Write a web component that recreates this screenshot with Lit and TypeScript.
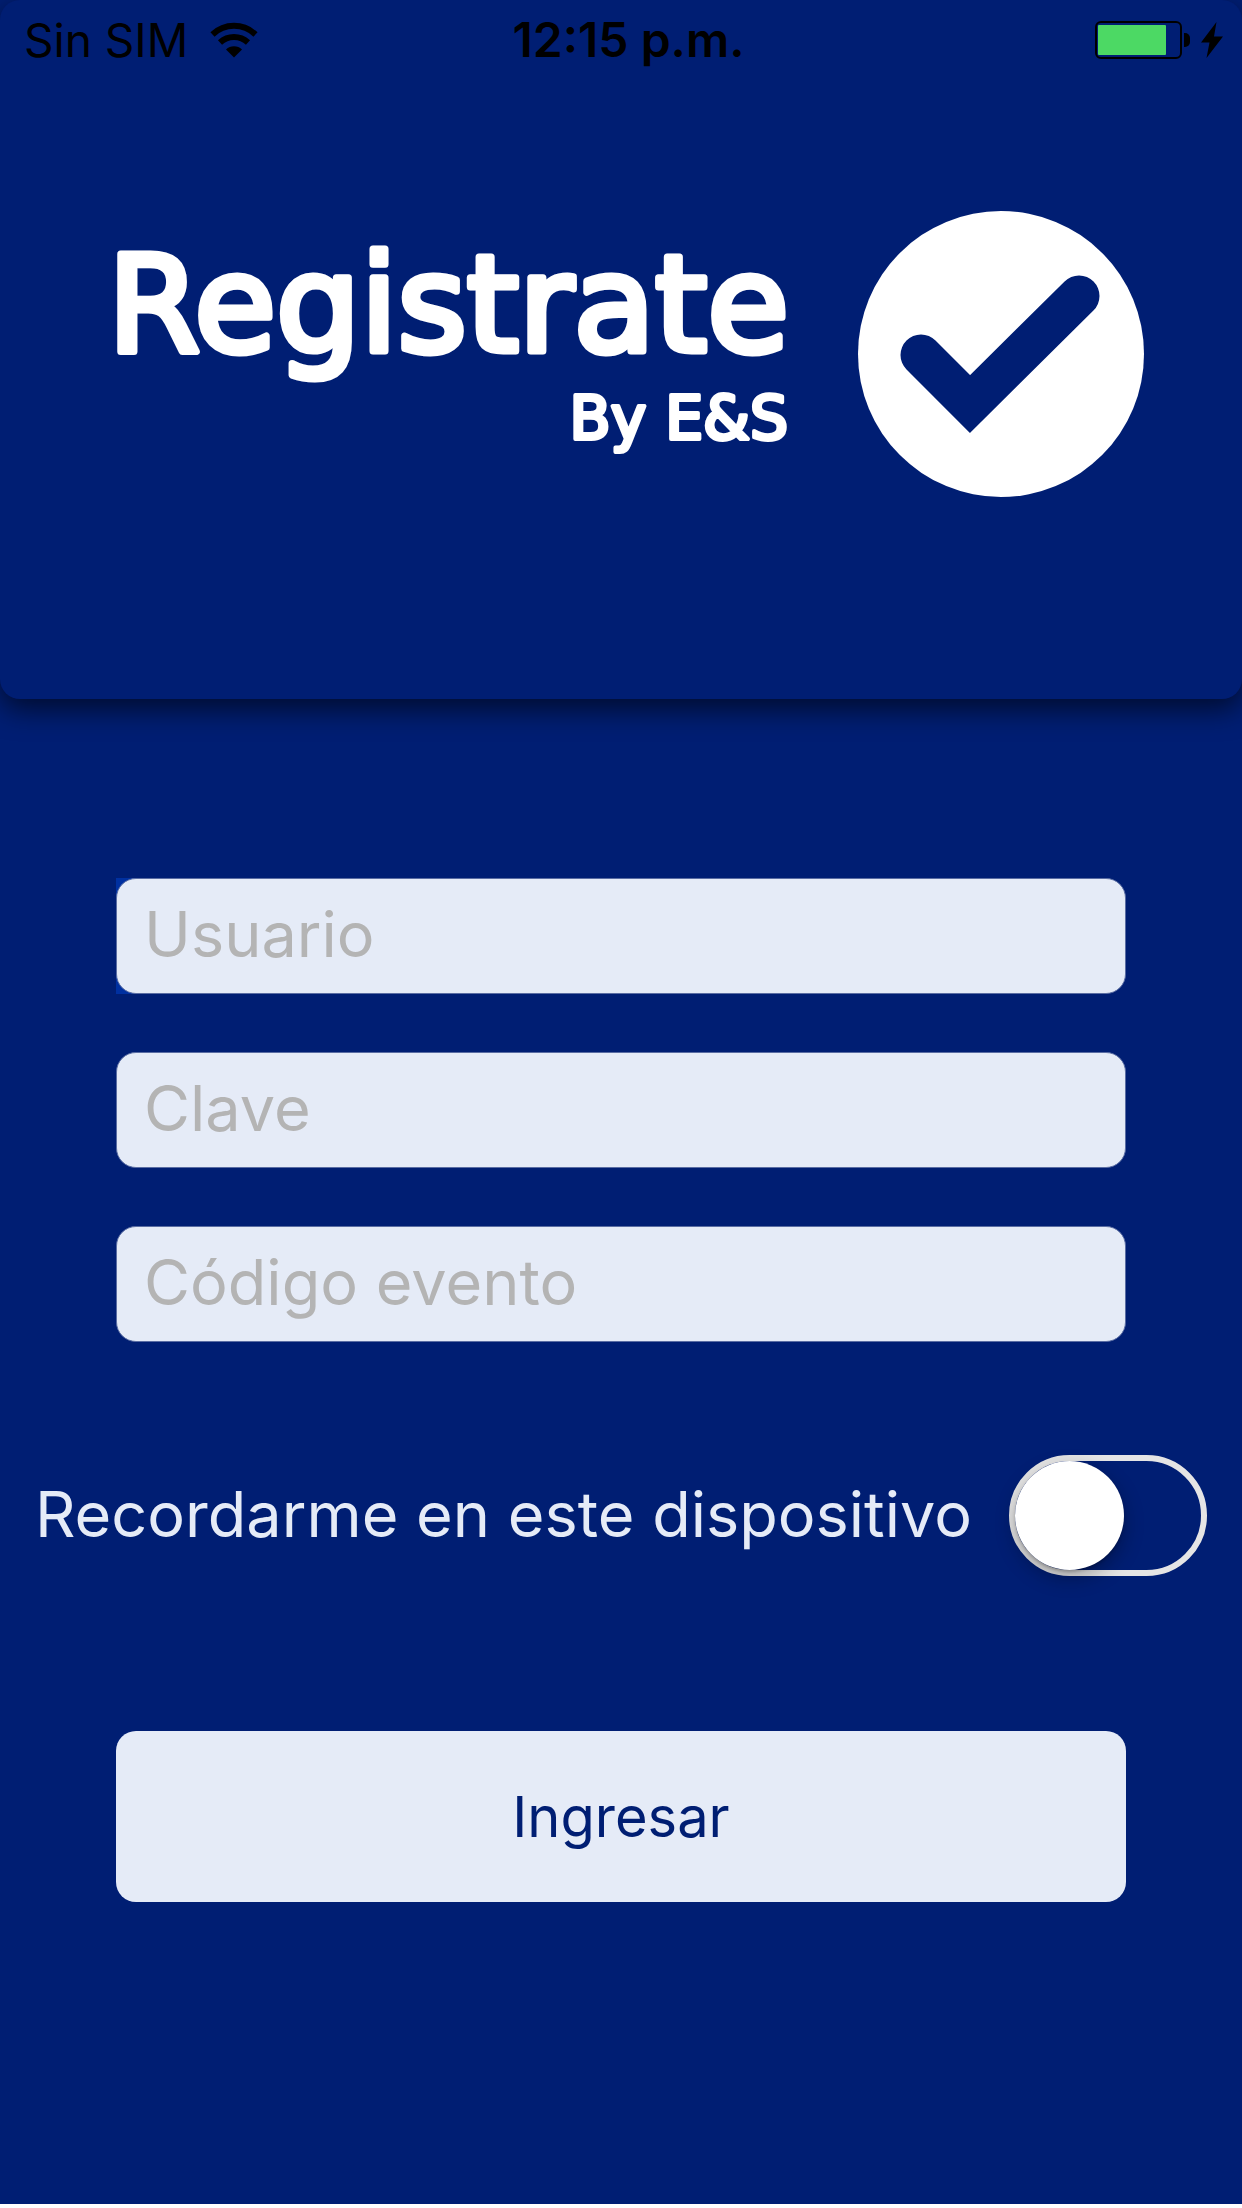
import { LitElement, html, css } from "lit";
import { customElement, state } from "lit/decorators.js";

@customElement("status-bar")
class StatusBar extends LitElement {
  static styles = css`
    :host {
      display: block;
    }
    .bar {
      display: grid;
      grid-template-columns: 1fr auto 1fr;
      align-items: center;
      height: 80px;
      padding: 0 19px 0 24px;
      color: #000;
      font-size: 46px;
      line-height: 56px;
    }
    .carrier,
    .power {
      display: flex;
      align-items: center;
    }
    .carrier {
      gap: 22px;
    }
    .power {
      justify-content: flex-end;
      gap: 10px;
    }
    .clock {
      padding-left: 10px;
      font-size: 48px;
      font-weight: 600;
    }
    svg {
      display: block;
    }
  `;

  render() {
    return html`
      <div class="bar">
        <div class="carrier">
          <span>Sin SIM</span>
          <svg width="48" height="36" viewBox="0 0 48 36" role="img" aria-label="Wi-Fi">
            <g fill="none" stroke="#000" stroke-width="6">
              <path d="M2.5 12.5a31 31 0 0 1 43 0" />
              <path d="M10 20.500a20.500 20.500 0 0 1 28 0" />
            </g>
            <path d="M16 27.500a11.500 11.500 0 0 1 16 0L24 35.500z" />
          </svg>
        </div>
        <time class="clock">12:15 p.m.</time>
        <div class="power">
          <svg width="96" height="38" viewBox="0 0 96 38" role="img" aria-label="Batería">
            <rect x="1" y="1" width="85" height="36" rx="5" fill="none" stroke="#000" stroke-width="2" />
            <rect x="3" y="4" width="68" height="30" rx="1" fill="#4cd964" />
            <path d="M89 12h1a5 5 0 0 1 5 5v4a5 5 0 0 1-5 5h-1z" />
          </svg>
          <svg width="22" height="36" viewBox="0 0 22 36" aria-hidden="true">
            <path d="M15.500 0 0 20.500h8.500L5.500 36 22 14.500h-9z" />
          </svg>
        </div>
      </div>
    `;
  }
}

@customElement("brand-logo")
class BrandLogo extends LitElement {
  static styles = css`
    :host {
      display: block;
    }
    .logo {
      display: block;
      width: 100%;
      height: auto;
    }
    .name,
    .owner {
      font-family: "DejaVu Sans", sans-serif;
      fill: #fff;
      stroke: #fff;
      stroke-linejoin: round;
    }
    .name {
      font-size: 133px;
      stroke-width: 7px;
    }
    .owner {
      font-size: 60px;
      stroke-width: 4px;
    }
  `;

  render() {
    return html`
      <svg class="logo" viewBox="-31 -31 1074 317" role="img" aria-label="Registrate By E&amp;S">
        <text class="name" x="679" y="140" text-anchor="end">Registrate</text>
        <text class="owner" x="678" y="228" text-anchor="end">By E&amp;S</text>
        <circle cx="891" cy="143" r="143" fill="#fff" />
        <path d="M811 144 860 193 969 85" fill="none" stroke="#001e73" stroke-width="41" stroke-linecap="round" />
      </svg>
    `;
  }
}

interface Field {
  id: string;
  label: string;
  type: string;
}

const FIELDS: Field[] = [
  { id: "usuario", label: "Usuario", type: "text" },
  { id: "clave", label: "Clave", type: "password" },
  { id: "codigo", label: "Código evento", type: "text" },
];

@customElement("app-root")
class AppRoot extends LitElement {
  @state() private remember = false;

  static styles = css`
    :host {
      display: block;
      font-family: Inter, "Liberation Sans", sans-serif;
    }
    * {
      box-sizing: border-box;
    }
    .page {
      min-height: 100vh;
      background: #001e73;
      border-bottom: 4px solid #fff;
    }
    .header {
      padding-bottom: 202px;
      border-radius: 20px;
      background: #001e73;
      box-shadow: 0 10px 28px rgba(0, 0, 0, 0.6);
    }
    .brand {
      padding: 100px 89px 0 79px;
    }
    .form {
      padding-top: 179px;
    }
    .fields {
      display: flex;
      flex-direction: column;
      gap: 58px;
      padding: 0 116px;
    }
    .field {
      display: block;
    }
    .field:first-child {
      background: linear-gradient(#0030a0, #0030a0) 0 0 / 24px 100% no-repeat;
    }
    .box {
      display: block;
      width: 100%;
      height: 116px;
      padding: 0 27px 4px;
      border: 1px solid #5a6da3;
      border-radius: 20px;
      background: #e5ebf7;
      color: #001e73;
      font: inherit;
      font-size: 63px;
      outline: none;
    }
    .box::placeholder {
      color: #b4b4b4;
      opacity: 1;
    }
    .remember {
      display: flex;
      align-items: center;
      justify-content: space-between;
      margin-top: 113px;
      padding: 0 35px;
      color: #e5ebf7;
      font-size: 63px;
      line-height: 76px;
    }
    .remember label {
      padding-bottom: 4px;
    }
    .switch {
      appearance: none;
      flex: none;
      width: 198px;
      height: 121px;
      margin: 0;
      border: 6px solid #e5e5e5;
      border-radius: 61px;
      background: transparent;
    }
    .switch::before {
      content: "";
      display: block;
      width: 109px;
      height: 109px;
      border-radius: 50%;
      background: #fff;
      box-shadow: 0 8px 20px rgba(0, 0, 0, 0.3), 0 2px 3px rgba(0, 0, 0, 0.2);
    }
    .switch:checked {
      border-color: #4cd964;
      background: #4cd964;
    }
    .switch:checked::before {
      margin-left: auto;
    }
    .actions {
      padding: 155px 116px 0;
    }
    .submit {
      display: block;
      width: 100%;
      height: 171px;
      padding: 0;
      border: 0;
      border-radius: 20px;
      background: #e5ebf7;
      color: #001e73;
      font: inherit;
      font-size: 56px;
    }
  `;

  private toggle(e: Event) {
    this.remember = (e.target as HTMLInputElement).checked;
  }

  render() {
    return html`
      <div class="page">
        <header class="header">
          <status-bar></status-bar>
          <div class="brand"><brand-logo></brand-logo></div>
        </header>
        <form class="form" @submit=${(e: Event) => e.preventDefault()}>
          <div class="fields">
            ${FIELDS.map(
              (f) => html`
                <label class="field" for=${f.id}>
                  <input class="box" id=${f.id} type=${f.type} placeholder=${f.label} aria-label=${f.label} />
                </label>
              `
            )}
          </div>
          <div class="remember">
            <label for="recordar">Recordarme en este dispositivo</label>
            <input
              class="switch"
              id="recordar"
              type="checkbox"
              role="switch"
              .checked=${this.remember}
              @change=${this.toggle}
            />
          </div>
          <div class="actions">
            <button class="submit" type="submit">Ingresar</button>
          </div>
        </form>
      </div>
    `;
  }
}
